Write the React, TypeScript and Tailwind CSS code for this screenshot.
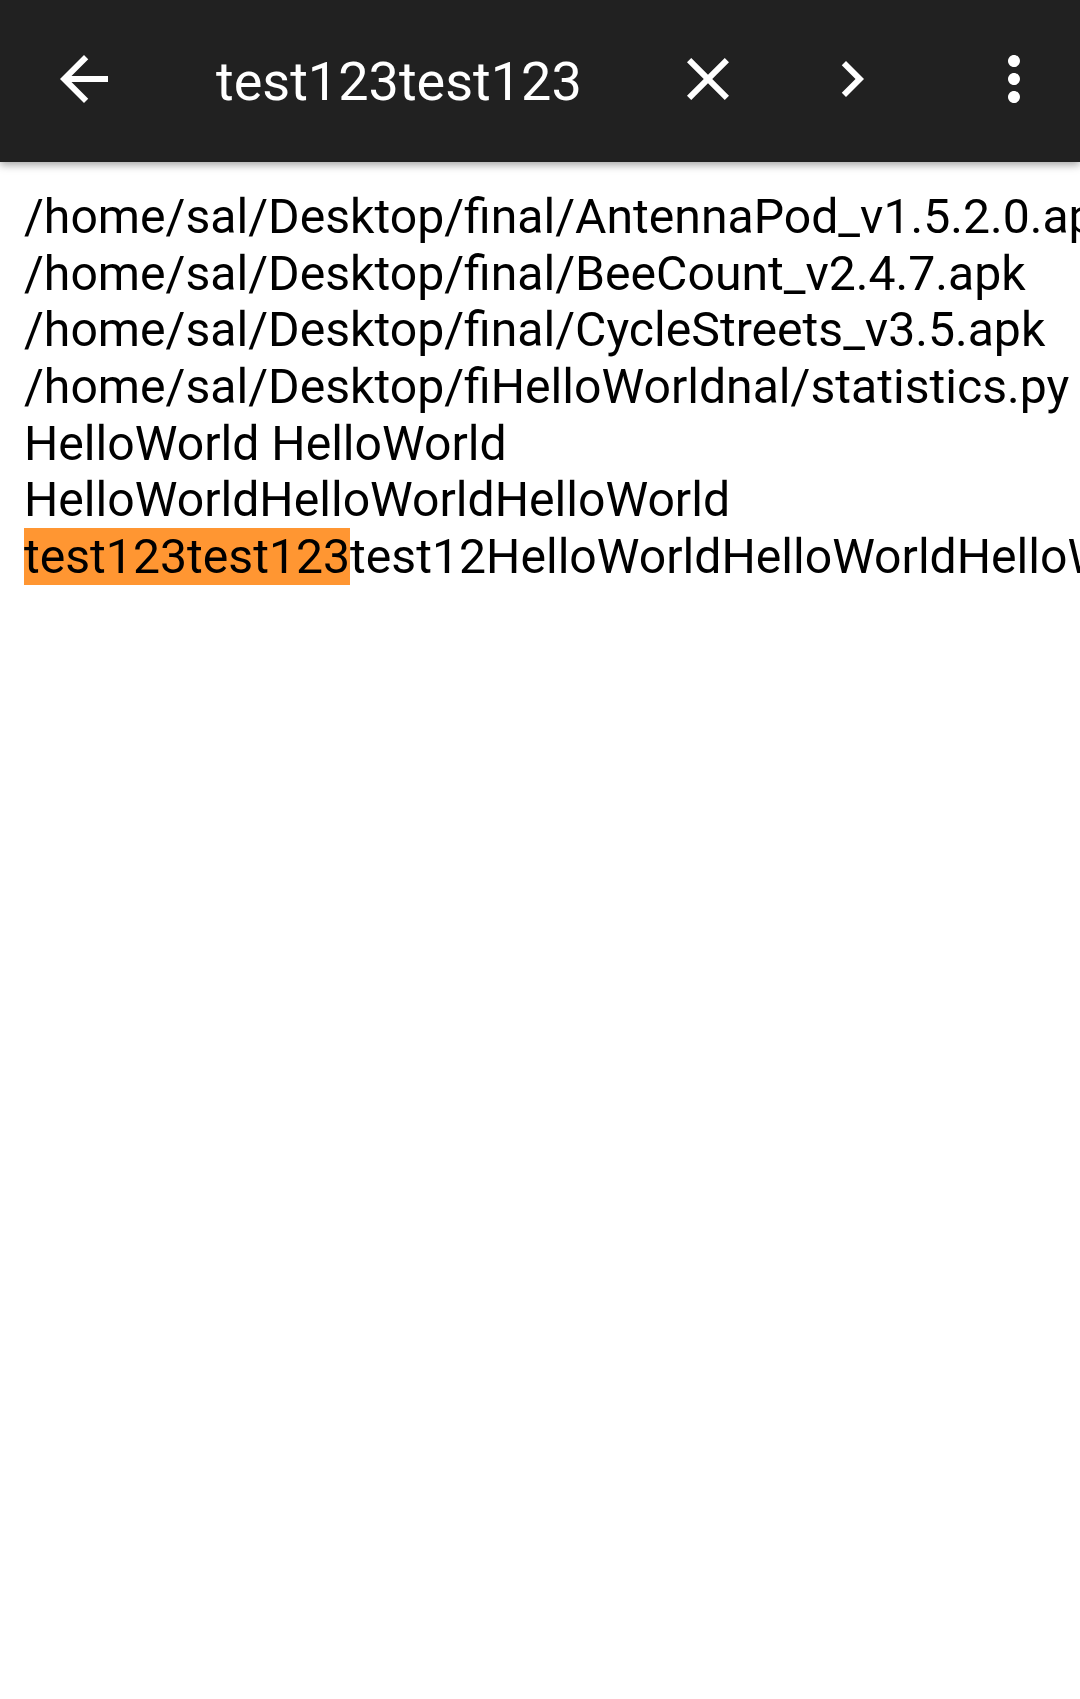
const lines = [
  "/home/sal/Desktop/final/AntennaPod_v1.5.2.0.apk",
  "/home/sal/Desktop/final/BeeCount_v2.4.7.apk",
  "/home/sal/Desktop/final/CycleStreets_v3.5.apk",
  "/home/sal/Desktop/fiHelloWorldnal/statistics.py",
  "HelloWorld HelloWorld",
  "HelloWorldHelloWorldHelloWorld",
];

const query = "test123test123";
const lastLine = "test123test123test12HelloWorldHelloWorldHelloWorld";

function IconButton({ children }: { children: React.ReactNode }) {
  return (
    <div className="flex h-[72px] w-[72px] shrink-0 items-center justify-center">
      <svg viewBox="0 0 24 24" className="h-[72px] w-[72px] fill-white">
        {children}
      </svg>
    </div>
  );
}

export default function App() {
  return (
    <div className="min-h-[1699px] w-[1080px] overflow-hidden bg-white font-['Roboto',sans-serif]">
      {/* Search toolbar */}
      <div className="relative z-10 flex h-[162px] items-center bg-[#212121] pb-[4px] pl-[48px] pr-[30px] shadow-[0_3px_8px_rgba(0,0,0,0.35)]">
        <IconButton>
          <path d="M20 11H7.83l5.59-5.59L12 4l-8 8 8 8 1.41-1.41L7.83 13H20v-2z" />
        </IconButton>
        <div className="ml-[96px] mt-[5px] flex-1 whitespace-nowrap text-[54px] leading-[63px] text-white">
          {query}
        </div>
        <IconButton>
          <path d="M19 6.41L17.59 5 12 10.59 6.41 5 5 6.41 10.59 12 5 17.59 6.41 19 12 13.41 17.59 19 19 17.59 13.41 12z" />
        </IconButton>
        <div className="ml-[72px]">
          <IconButton>
            <path d="M10 6L8.59 7.41 13.17 12l-4.58 4.59L10 18l6-6z" />
          </IconButton>
        </div>
        <div className="ml-[90px]">
          <IconButton>
            <path d="M12 8c1.1 0 2-.9 2-2s-.9-2-2-2-2 .9-2 2 .9 2 2 2zm0 2c-1.1 0-2 .9-2 2s.9 2 2 2 2-.9 2-2-.9-2-2-2zm0 6c-1.1 0-2 .9-2 2s.9 2 2 2 2-.9 2-2-.9-2-2-2z" />
          </IconButton>
        </div>
      </div>

      {/* File content */}
      <div className="overflow-hidden whitespace-nowrap pl-[24px] pt-[27px] text-[48.15px] leading-[56.67px] text-black">
        {lines.map((line) => (
          <div key={line}>{line}</div>
        ))}
        <div>
          <span className="bg-[#ff9632]">{query}</span>
          {lastLine.slice(query.length)}
        </div>
      </div>
    </div>
  );
}
